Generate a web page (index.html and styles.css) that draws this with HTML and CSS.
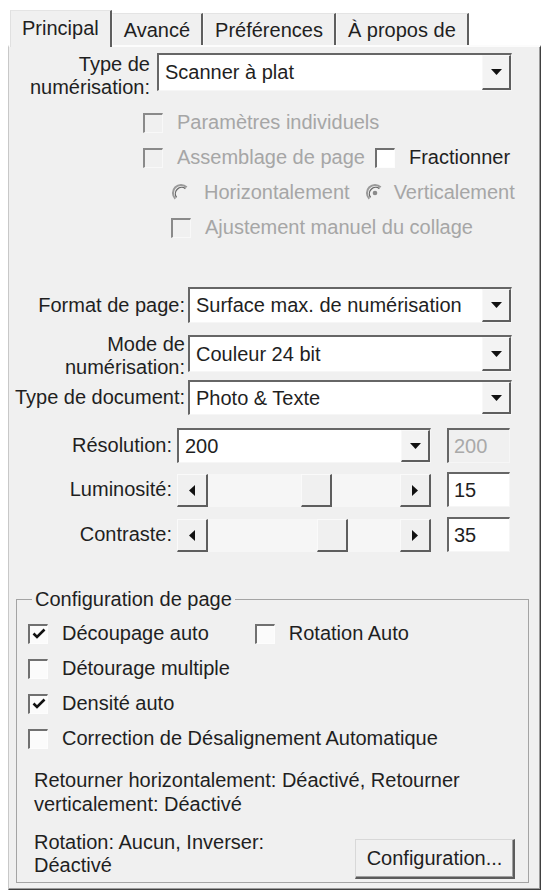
FILE: index.html
```html
<!DOCTYPE html>
<html lang="fr">
<head>
<meta charset="utf-8">
<title>Principal</title>
<link rel="stylesheet" href="styles.css">
</head>
<body>
<div class="window">
  <div class="tabbar">
    <div class="tab active">Principal</div>
    <div class="tab">Avancé</div>
    <div class="tab">Préférences</div>
    <div class="tab">À propos de</div>
  </div>
  <div class="panel">
    <div class="row row-scan">
      <div class="label lbl-scan"><span>Type de<br>numérisation:</span></div>
      <div class="combo combo-scan">
        <span class="combo-text">Scanner à plat</span>
        <span class="combo-btn"><svg width="11" height="6" viewBox="0 0 11 6"><path d="M0 0H11L5.5 6Z" fill="#111"/></svg></span>
      </div>
    </div>

    <div class="checks">
      <div class="check-row ind1">
        <span class="cb dis"></span><span class="cb-label disabled">Paramètres individuels</span>
      </div>
      <div class="check-row ind1">
        <span class="cb dis"></span><span class="cb-label disabled">Assemblage de page</span>
        <span class="cb cb-fraction"></span><span class="cb-label">Fractionner</span>
      </div>
      <div class="check-row ind2">
        <svg class="radio" width="20" height="20" viewBox="0 0 20 20"><path d="M4.3 15.7A8 8 0 0 1 15.7 4.3" fill="none" stroke="#9a9a9a" stroke-width="2"/><path d="M5.6 14.4A6.3 6.3 0 0 1 14.4 5.6" fill="none" stroke="#6a6a6a" stroke-width="1.3"/></svg>
        <span class="cb-label disabled rad-h">Horizontalement</span>
        <svg class="radio radio-v" width="20" height="20" viewBox="0 0 20 20"><path d="M4.3 15.7A8 8 0 0 1 15.7 4.3" fill="none" stroke="#9a9a9a" stroke-width="2"/><path d="M5.6 14.4A6.3 6.3 0 0 1 14.4 5.6" fill="none" stroke="#6a6a6a" stroke-width="1.3"/><circle cx="10" cy="10" r="2.3" fill="#8a8a8a"/></svg>
        <span class="cb-label disabled rad-v">Verticalement</span>
      </div>
      <div class="check-row ind2">
        <span class="cb dis"></span><span class="cb-label disabled">Ajustement manuel du collage</span>
      </div>
    </div>

    <div class="row row-format">
      <div class="label lbl-wide"><span>Format de page:</span></div>
      <div class="combo combo-wide">
        <span class="combo-text">Surface max. de numérisation</span>
        <span class="combo-btn"><svg width="11" height="6" viewBox="0 0 11 6"><path d="M0 0H11L5.5 6Z" fill="#111"/></svg></span>
      </div>
    </div>

    <div class="row row-mode">
      <div class="label lbl-wide lbl-two"><span>Mode de<br>numérisation:</span></div>
      <div class="combo combo-wide">
        <span class="combo-text">Couleur 24 bit</span>
        <span class="combo-btn"><svg width="11" height="6" viewBox="0 0 11 6"><path d="M0 0H11L5.5 6Z" fill="#111"/></svg></span>
      </div>
    </div>

    <div class="row row-doc">
      <div class="label lbl-wide"><span>Type de document:</span></div>
      <div class="combo combo-wide">
        <span class="combo-text">Photo &amp; Texte</span>
        <span class="combo-btn"><svg width="11" height="6" viewBox="0 0 11 6"><path d="M0 0H11L5.5 6Z" fill="#111"/></svg></span>
      </div>
    </div>

    <div class="row row-res">
      <div class="label lbl-mid"><span>Résolution:</span></div>
      <div class="combo combo-res">
        <span class="combo-text">200</span>
        <span class="combo-btn"><svg width="11" height="6" viewBox="0 0 11 6"><path d="M0 0H11L5.5 6Z" fill="#111"/></svg></span>
      </div>
      <div class="edit dis">200</div>
    </div>

    <div class="row row-lum">
      <div class="label lbl-mid"><span>Luminosité:</span></div>
      <div class="scroll">
        <span class="sbtn"><svg width="6" height="11" viewBox="0 0 6 11"><path d="M6 0V11L0 5.5Z" fill="#111"/></svg></span>
        <span class="track"><span class="thumb" style="margin-left:93px"></span></span>
        <span class="sbtn"><svg width="6" height="11" viewBox="0 0 6 11"><path d="M0 0V11L6 5.5Z" fill="#111"/></svg></span>
      </div>
      <div class="edit">15</div>
    </div>

    <div class="row row-con">
      <div class="label lbl-mid"><span>Contraste:</span></div>
      <div class="scroll">
        <span class="sbtn"><svg width="6" height="11" viewBox="0 0 6 11"><path d="M6 0V11L0 5.5Z" fill="#111"/></svg></span>
        <span class="track"><span class="thumb" style="margin-left:109px"></span></span>
        <span class="sbtn"><svg width="6" height="11" viewBox="0 0 6 11"><path d="M0 0V11L6 5.5Z" fill="#111"/></svg></span>
      </div>
      <div class="edit">35</div>
    </div>

    <fieldset class="group">
      <legend>Configuration de page</legend>
      <div class="gcheck">
        <span class="cb"><svg width="14" height="12" viewBox="0 0 14 12"><path d="M1.5 5.5L5 9L12.5 1.5" fill="none" stroke="#111" stroke-width="2.6"/></svg></span>
        <span class="cb-label">Découpage auto</span>
        <span class="cb cb-rot"></span>
        <span class="cb-label">Rotation Auto</span>
      </div>
      <div class="gcheck">
        <span class="cb"></span><span class="cb-label">Détourage multiple</span>
      </div>
      <div class="gcheck">
        <span class="cb"><svg width="14" height="12" viewBox="0 0 14 12"><path d="M1.5 5.5L5 9L12.5 1.5" fill="none" stroke="#111" stroke-width="2.6"/></svg></span>
        <span class="cb-label">Densité auto</span>
      </div>
      <div class="gcheck">
        <span class="cb"></span><span class="cb-label">Correction de Désalignement Automatique</span>
      </div>
      <p class="info">Retourner horizontalement: Déactivé, Retourner<br>verticalement: Déactivé</p>
      <div class="bottom-row">
        <p class="info info-rot">Rotation: Aucun, Inverser:<br>Déactivé</p>
        <button class="btn" type="button">Configuration...</button>
      </div>
    </fieldset>
  </div>
</div>
</body>
</html>
```

FILE: styles.css
```css
* { box-sizing: border-box; }
html, body { margin: 0; padding: 0; }
body {
  background: #ffffff;
  font-family: "Liberation Sans", Arial, sans-serif;
  font-size: 20px;
  color: #1f1f1f;
}
.window { width: 543px; height: 893px; overflow: hidden; }

/* tabs */
.tabbar {
  display: flex;
  align-items: flex-end;
  height: 45px;
  padding-left: 10px;
  position: relative;
  z-index: 1;
}
.tab {
  height: 32px;
  padding: 0 11px;
  display: flex;
  align-items: center;
  background: #f0f0f0;
  border-top: 1px solid #e4e4e4;
  border-left: 1px solid #f8f8f8;
  border-right: 2px solid #5e5e5e;
  white-space: nowrap;
  line-height: 1;
}
.tab.active {
  height: 37px;
  margin-bottom: -2px;
  padding-bottom: 3px;
  border-left-color: #e0e0e0;
}

/* panel */
.panel {
  margin-left: 8px;
  width: 533px;
  height: 845px;
  background: #f0f0f0;
  border-style: solid;
  border-width: 2px 1px 1px 1px;
  border-color: #fcfcfc #404040 #404040 #c8c8c8;
  box-shadow: inset -1px -1px #9c9c9c;
  display: flex;
  flex-direction: column;
}

.row { display: flex; align-items: center; flex: none; }
.label {
  display: flex;
  justify-content: flex-end;
  flex: none;
  line-height: 23px;
  white-space: nowrap;
  text-align: right;
}
.lbl-scan { width: 141px; margin-right: 7px; }
.lbl-wide { width: 176px; margin-right: 3px; }
.lbl-mid { width: 163px; margin-right: 5px; }
.lbl-two { margin-top: -2px; }

.row-scan { margin-top: 6px; height: 46px; align-items: flex-start; }
.row-format { margin-top: 42px; height: 36px; }
.row-mode { margin-top: 12px; height: 37px; align-items: flex-start; }
.row-doc { margin-top: 8px; height: 35px; }
.row-res { margin-top: 13px; height: 35px; }
.row-lum { margin-top: 9px; height: 35px; }
.row-con { margin-top: 10px; height: 35px; }

/* combo boxes */
.combo {
  display: flex;
  background: #ffffff;
  border-style: solid;
  border-width: 2px 1px 1px 2px;
  border-color: #666666 #f6f6f6 #f6f6f6 #666666;
  height: 100%;
}
.combo-scan { width: 355px; height: 38px; }
.combo-wide { width: 324px; }
.combo-res { width: 254px; }
.combo-text {
  flex: 1;
  display: flex;
  align-items: center;
  padding-left: 6px;
  white-space: nowrap;
  overflow: hidden;
}
.combo-btn {
  width: 29px;
  flex: none;
  background: #f3f3f3;
  border-style: solid;
  border-width: 1px 2px 2px 1px;
  border-color: #f8f8f8 #5e5e5e #5e5e5e #f8f8f8;
  display: flex;
  align-items: center;
  justify-content: center;
}

/* edits */
.edit {
  width: 63px;
  height: 35px;
  margin-left: 16px;
  flex: none;
  background: #ffffff;
  border-style: solid;
  border-width: 2px 1px 1px 2px;
  border-color: #666666 #f6f6f6 #f6f6f6 #666666;
  padding-left: 5px;
  display: flex;
  align-items: center;
}
.edit.dis { background: #f0f0f0; color: #a9a9a9; }

/* scrollbars */
.scroll {
  width: 254px;
  height: 33px;
  flex: none;
  display: flex;
  align-self: flex-end;
  background: #f6f6f6;
}
.sbtn, .thumb {
  width: 31px;
  flex: none;
  background: #f0f0f0;
  border-style: solid;
  border-width: 1px 2px 2px 1px;
  border-color: #fafafa #5e5e5e #5e5e5e #fafafa;
  display: flex;
  align-items: center;
  justify-content: center;
}
.track { flex: 1; display: flex; }

/* checkboxes */
.checks { margin-top: 6px; flex: none; }
.check-row { display: flex; align-items: center; height: 35px; white-space: nowrap; }
.ind1 { padding-left: 134px; }
.ind2 { padding-left: 162px; }
.cb {
  width: 20px;
  height: 20px;
  flex: none;
  background: #fbfbfb;
  border-style: solid;
  border-width: 2px 1px 1px 2px;
  border-color: #707070 #fdfdfd #fdfdfd #707070;
  display: flex;
  align-items: center;
  justify-content: center;
}
.cb.dis { background: #f0f0f0; border-color: #8a8a8a #f8f8f8 #f8f8f8 #8a8a8a; }
.cb-label { margin-left: 14px; line-height: 23px; }
.disabled { color: #a6a6a6; }
.cb-fraction { margin-left: 10px; background: #ffffff; }
.radio { flex: none; }
.rad-h { margin-left: 13px; }
.radio-v { margin-left: 15px; }
.rad-v { margin-left: 9px; }

/* group box */
.group {
  margin: 36px 0 0 7px;
  width: 513px;
  height: 295px;
  padding: 5px 13px 0 11px;
  border: 1px solid #a4a4a4;
  min-inline-size: 0;
  flex: none;
}
.group legend {
  margin-left: 4px;
  padding: 0 3px;
  line-height: 23px;
}
.gcheck { display: flex; align-items: center; height: 35px; white-space: nowrap; }
.cb-rot { margin-left: 46px; }

.info {
  margin: 12px 0 0 6px;
  line-height: 24px;
}
.bottom-row {
  display: flex;
  justify-content: space-between;
  align-items: flex-start;
  margin-top: 15px;
}
.info-rot { margin: 0 0 0 6px; line-height: 23px; }
.btn {
  width: 160px;
  height: 40px;
  margin-top: 8px;
  padding: 0;
  background: #f0f0f0;
  border-style: solid;
  border-width: 1px 2px 2px 1px;
  border-color: #d8d8d8 #5c5c5c #5c5c5c #d8d8d8;
  box-shadow: inset -1px -1px #a0a0a0;
  font: inherit;
  color: inherit;
  display: flex;
  align-items: center;
  justify-content: center;
}
```
